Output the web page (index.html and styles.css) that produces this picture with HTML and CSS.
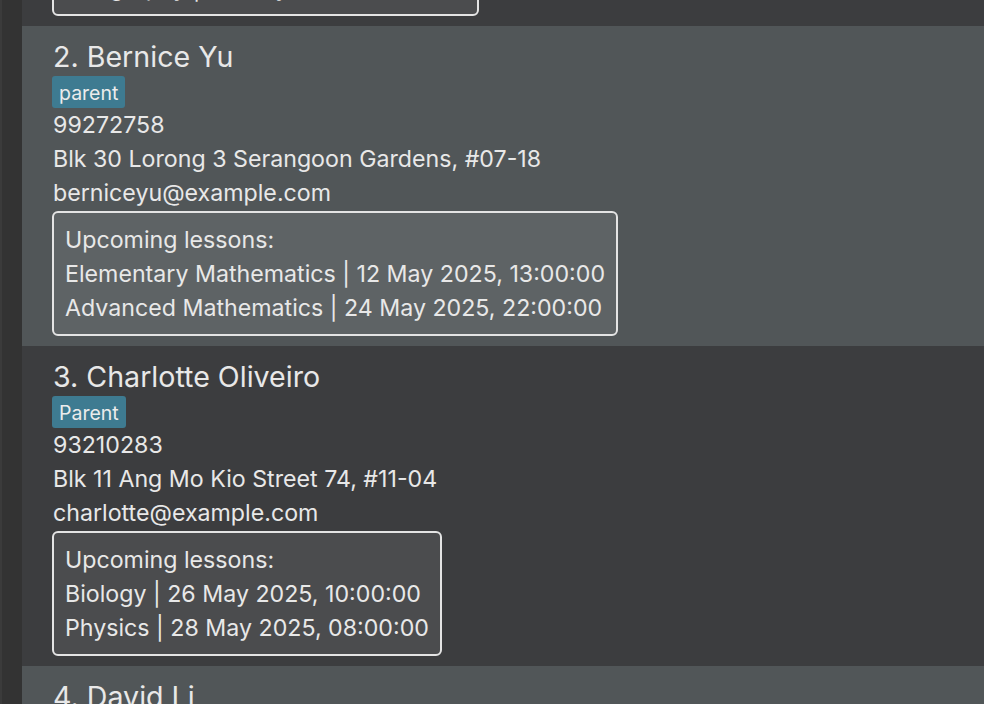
FILE: index.html
```html
<!DOCTYPE html>
<html lang="en">
<head>
<meta charset="utf-8">
<title>Contacts</title>
<link rel="stylesheet" href="styles.css">
</head>
<body>
<div class="app">
  <div class="gutter"></div>
  <div class="list">
    <div class="row even">
      <div class="name">1. Alex Yeoh</div>
      <div class="tags"><span class="tag">student</span></div>
      <div class="line">87438807</div>
      <div class="line">Blk 30 Geylang Street 29, #06-40</div>
      <div class="line">alexyeoh@example.com</div>
      <div class="lessons">
        <div class="line">Upcoming lessons:</div>
        <div class="line">Chemistry | 20 May 2025, 14:00:00</div>
        <div class="line">Geography | 22 May 2025, 09:00:00</div>
      </div>
    </div>
    <div class="row odd">
      <div class="name">2. Bernice Yu</div>
      <div class="tags"><span class="tag">parent</span></div>
      <div class="line">99272758</div>
      <div class="line">Blk 30 Lorong 3 Serangoon Gardens, #07-18</div>
      <div class="line">berniceyu@example.com</div>
      <div class="lessons">
        <div class="line">Upcoming lessons:</div>
        <div class="line">Elementary Mathematics | 12 May 2025, 13:00:00</div>
        <div class="line">Advanced Mathematics | 24 May 2025, 22:00:00</div>
      </div>
    </div>
    <div class="row even">
      <div class="name">3. Charlotte Oliveiro</div>
      <div class="tags"><span class="tag">Parent</span></div>
      <div class="line">93210283</div>
      <div class="line">Blk 11 Ang Mo Kio Street 74, #11-04</div>
      <div class="line">charlotte@example.com</div>
      <div class="lessons">
        <div class="line">Upcoming lessons:</div>
        <div class="line">Biology | 26 May 2025, 10:00:00</div>
        <div class="line">Physics | 28 May 2025, 08:00:00</div>
      </div>
    </div>
    <div class="row odd">
      <div class="name">4. David Li</div>
      <div class="tags"><span class="tag">student</span></div>
      <div class="line">91031282</div>
      <div class="line">Blk 436 Serangoon Gardens Street 26, #16-43</div>
      <div class="line">lidavid@example.com</div>
    </div>
  </div>
</div>
</body>
</html>
```

FILE: styles.css
```css
html, body {
  margin: 0;
  padding: 0;
  height: 100%;
  overflow: hidden;
  background: #333333;
}

body {
  font-family: Inter, "Noto Sans", sans-serif;
  color: #e8e8e8;
}

.app {
  display: flex;
  height: 100%;
}

.gutter {
  width: 20px;
  flex: none;
  border-left: 2px solid #3b3b3b;
  background: #333333;
}

.list {
  flex: 1;
  display: flex;
  flex-direction: column;
  margin-top: -294px;
}

.row {
  height: 320px;
  box-sizing: border-box;
  flex: none;
  padding: 11px 0 10px 30px;
  display: flex;
  flex-direction: column;
  align-items: flex-start;
}

.row.even {
  background: #3c3d3f;
}

.row.odd {
  background: #515658;
}

.name {
  font-size: 28.6px;
  line-height: 39px;
  height: 39px;
  padding-left: 1px;
}

.tags {
  display: flex;
  height: 32px;
}

.tag {
  background: #3e7b91;
  color: #ececec;
  font-size: 19.5px;
  line-height: 32px;
  padding: 1px 7px 0 7px;
  height: 31px;
  border-radius: 3px;
}

.line {
  font-size: 23.2px;
  line-height: 34px;
  padding-left: 1px;
  white-space: nowrap;
}

.lessons {
  margin-top: 1px;
  border: 2px solid #e4e4e4;
  border-radius: 6px;
  padding: 10px 11px 9px 11px;
  background: rgba(255, 255, 255, 0.08);
}

.lessons .line {
  padding-left: 0;
}
```
